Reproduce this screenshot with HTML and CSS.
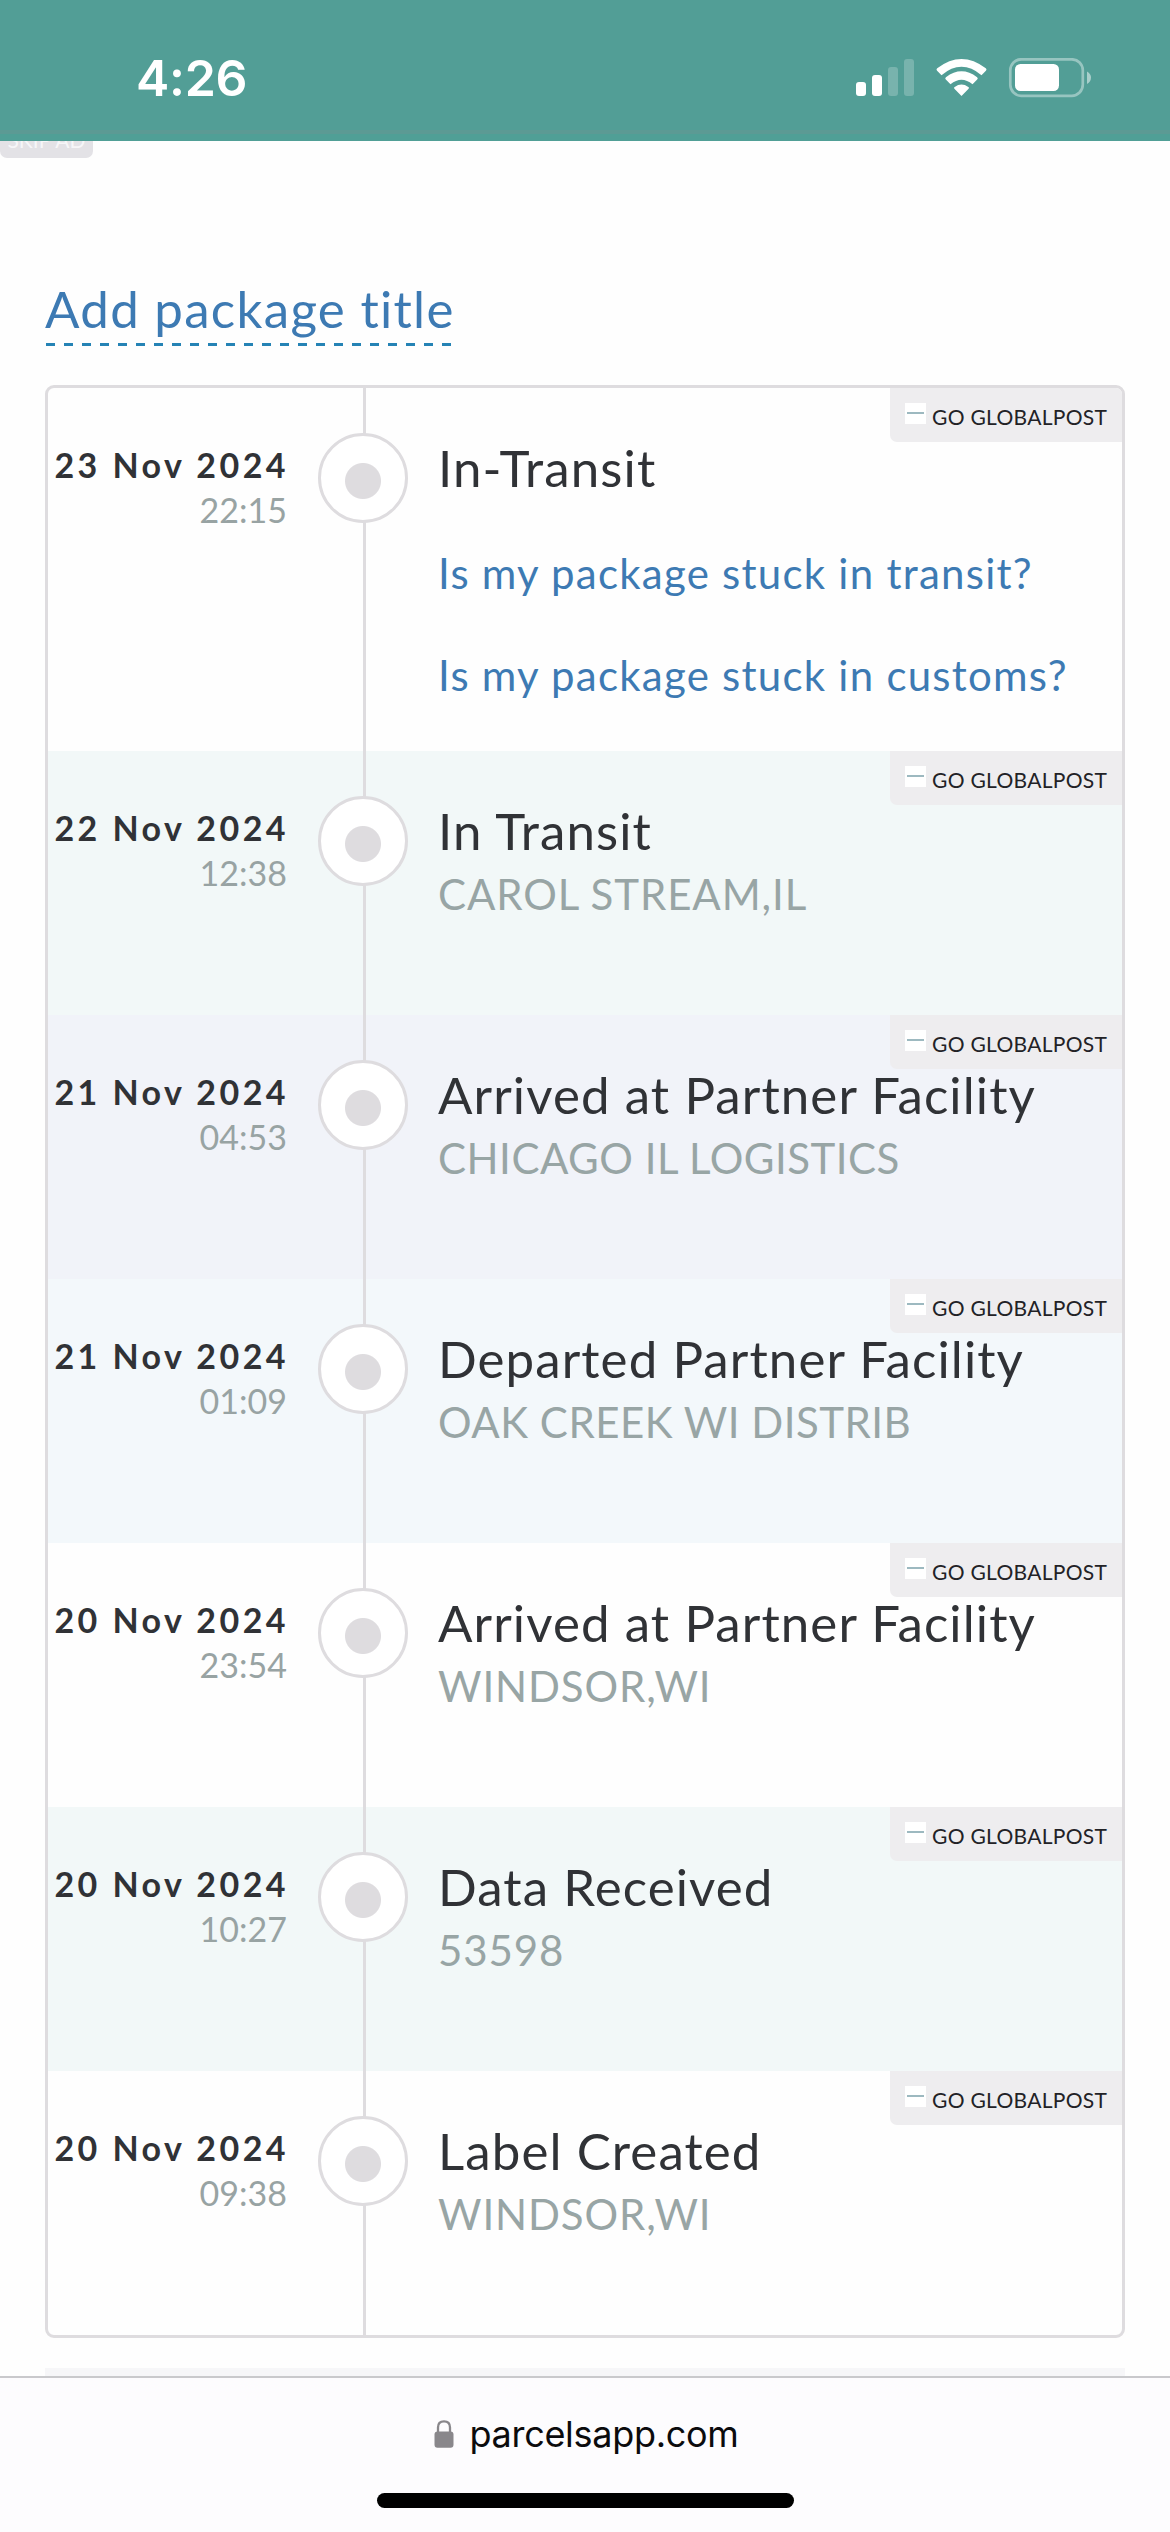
FILE: index.html
```
<!DOCTYPE html>
<html lang="en">
<head>
<meta charset="utf-8">
<title>Parcels</title>
<link rel="stylesheet" href="styles.css">
</head>
<body>
<header class="status">
  <span class="clock">4:26</span>
  <svg class="status-icons" width="236" height="40" viewBox="0 0 236 40" fill="#fff">
    <rect x="0" y="24" width="10" height="14" rx="3"/>
    <rect x="16" y="17" width="10" height="21" rx="3"/>
    <rect x="32" y="9" width="10" height="29" rx="3" opacity=".22"/>
    <rect x="48" y="1" width="10" height="37" rx="3" opacity=".22"/>
    <path d="M105.5 38 L98.4 30.7 Q97.4 29.6 98.7 28.9 Q105.5 24 112.3 28.9 Q113.6 29.6 112.6 30.7 Z"/>
    <path d="M94.5 26.3 L89.8 21.6 Q88.6 20.3 89.9 19.2 Q105.5 7.3 121.1 19.2 Q122.4 20.3 121.2 21.6 L116.5 26.3 Q105.5 17 94.5 26.3 Z"/>
    <path d="M85.5 17.2 L81.1 12.7 Q79.9 11.4 81.2 10.2 Q105.5 -8.4 129.8 10.2 Q131.1 11.4 129.9 12.7 L125.5 17.2 Q105.5 0.4 85.5 17.2 Z"/>
    <rect x="154.3" y="1.3" width="72.5" height="36.5" rx="11" fill="none" stroke="#fff" stroke-width="2.7" opacity=".4"/>
    <rect x="159" y="6" width="44" height="27" rx="5.5"/>
    <path d="M231 13.5 Q235 16 235 19.5 Q235 23.5 231 26 Z" opacity=".5"/>
  </svg>
</header>

<main class="page">
  <div class="ad-strip"><span class="ad-label">SKIP AD</span></div>
  <a class="package-title">Add package title</a>

  <ul class="events">
    <li class="event first">
      <div class="when"><strong class="date">23 Nov 2024</strong><span class="time">22:15</span></div>
      <div class="what">
        <span class="name">In-Transit</span>
        <a class="help">Is my package stuck in transit?</a>
        <a class="help">Is my package stuck in customs?</a>
      </div>
      <i class="marker"></i><span class="carrier"><i class="logo"></i>GO GLOBALPOST</span>
    </li>
    <li class="event mint">
      <div class="when"><strong class="date">22 Nov 2024</strong><span class="time">12:38</span></div>
      <div class="what"><span class="name">In Transit</span><span class="place wide">CAROL STREAM,IL</span></div>
      <i class="marker"></i><span class="carrier"><i class="logo"></i>GO GLOBALPOST</span>
    </li>
    <li class="event lilac">
      <div class="when"><strong class="date">21 Nov 2024</strong><span class="time">04:53</span></div>
      <div class="what"><span class="name">Arrived at Partner Facility</span><span class="place">CHICAGO IL LOGISTICS</span></div>
      <i class="marker"></i><span class="carrier"><i class="logo"></i>GO GLOBALPOST</span>
    </li>
    <li class="event sky">
      <div class="when"><strong class="date">21 Nov 2024</strong><span class="time">01:09</span></div>
      <div class="what"><span class="name">Departed Partner Facility</span><span class="place">OAK CREEK WI DISTRIB</span></div>
      <i class="marker"></i><span class="carrier"><i class="logo"></i>GO GLOBALPOST</span>
    </li>
    <li class="event">
      <div class="when"><strong class="date">20 Nov 2024</strong><span class="time">23:54</span></div>
      <div class="what"><span class="name">Arrived at Partner Facility</span><span class="place wide">WINDSOR,WI</span></div>
      <i class="marker"></i><span class="carrier"><i class="logo"></i>GO GLOBALPOST</span>
    </li>
    <li class="event mint">
      <div class="when"><strong class="date">20 Nov 2024</strong><span class="time">10:27</span></div>
      <div class="what"><span class="name">Data Received</span><span class="place wide">53598</span></div>
      <i class="marker"></i><span class="carrier"><i class="logo"></i>GO GLOBALPOST</span>
    </li>
    <li class="event">
      <div class="when"><strong class="date">20 Nov 2024</strong><span class="time">09:38</span></div>
      <div class="what"><span class="name">Label Created</span><span class="place wide">WINDSOR,WI</span></div>
      <i class="marker"></i><span class="carrier"><i class="logo"></i>GO GLOBALPOST</span>
    </li>
  </ul>
  <div class="next-panel"></div>
</main>

<footer class="browser-bar">
  <div class="address">
    <svg class="lock" width="20" height="28" viewBox="0 0 20 28">
      <path d="M4 13 V7.5 Q4 1.3 10 1.3 Q16 1.3 16 7.5 V13" fill="none" stroke="#89878b" stroke-width="2.3"/>
      <rect x="0.5" y="11.5" width="19" height="16.3" rx="3" fill="#89878b"/>
    </svg>
    <span>parcelsapp.com</span>
  </div>
  <div class="home"></div>
</footer>
</body>
</html>
```
FILE: styles.css
```
* { box-sizing: border-box; }
body {
  margin: 0;
  width: 1170px;
  height: 2532px;
  display: flex;
  flex-direction: column;
  overflow: hidden;
  background: #fefefe;
  font-family: Lato, "Noto Sans", sans-serif;
  font-variant-ligatures: none;
}

.status {
  height: 141px;
  padding: 48px 78px 0 136px;
  display: flex;
  justify-content: space-between;
  align-items: flex-start;
  background: linear-gradient(#529e96 130px, #5c9a94 130px, #5c9a94 134px, #509f96 134px);
}
.clock {
  font: 600 50px/60px Inter, sans-serif;
  letter-spacing: -0.3px;
  color: #fff;
}
.status-icons { margin-top: 10px; }

.page {
  height: 2235px;
  padding: 0 45px;
  display: flex;
  flex-direction: column;
  align-items: flex-start;
}
.ad-strip {
  height: 17px;
  width: 93px;
  margin-left: -45px;
  overflow: hidden;
  display: flex;
  align-items: flex-end;
  border-radius: 0 0 7px 7px;
  background: #e3e2e6;
}
.ad-label {
  width: 93px;
  text-align: center;
  font-size: 21px;
  line-height: 36px;
  color: #f6f6f8;
}

.package-title {
  margin-top: 121px;
  height: 67px;
  font-size: 51px;
  line-height: 60px;
  letter-spacing: 1.3px;
  color: #3d7ab3;
  background: repeating-linear-gradient(90deg, #2583b5 0 9px, transparent 9px 18px) 1px 100% / 100% 3px no-repeat;
}

.events {
  margin: 39px 0 0;
  padding: 0;
  width: 1080px;
  list-style: none;
  border: 3px solid #dedcdf;
  border-radius: 9px;
  overflow: hidden;
}
.event {
  position: relative;
  height: 264px;
  display: grid;
  grid-template-columns: 318px 1fr;
}
.event.first { height: 363px; }
.event.mint { background: #f2f8f8; }
.event.lilac { background: #f1f3f9; }
.event.sky { background: #f3f8fb; }

.when {
  display: flex;
  flex-direction: column;
  align-items: flex-end;
  padding: 57px 74px 0 0;
  border-right: 3px solid #dedcdf;
  white-space: nowrap;
}
.date {
  font-size: 34px;
  line-height: 40px;
  letter-spacing: 3.45px;
  color: #303236;
}
.time {
  margin: 2px 2px 0 0;
  font-size: 34px;
  line-height: 45px;
  color: #98a3a3;
}

.what {
  display: flex;
  flex-direction: column;
  padding: 50px 0 0 72px;
  white-space: nowrap;
}
.name {
  font-size: 51px;
  line-height: 60px;
  letter-spacing: 1.1px;
  color: #303236;
}
.place {
  margin-top: 8px;
  font-size: 42px;
  line-height: 50px;
  letter-spacing: 0.5px;
  color: #98a5a5;
}
.place.wide { letter-spacing: 0.9px; }
.help {
  margin-top: 50px;
  font-size: 42px;
  line-height: 50px;
  letter-spacing: 1.25px;
  color: #3d7ab3;
}
.help + .help { margin-top: 52px; }

.marker {
  position: absolute;
  left: 270px;
  top: 45px;
  width: 90px;
  height: 90px;
  border: 3px solid #dedcdf;
  border-radius: 50%;
  background: radial-gradient(circle at 42px 45px, #dedcdf 17.5px, #fff 18.5px);
}

.carrier {
  position: absolute;
  top: 0;
  right: 0;
  width: 232px;
  height: 54px;
  padding-left: 15px;
  display: flex;
  gap: 6px;
  font-size: 21px;
  line-height: 57px;
  letter-spacing: 0.3px;
  white-space: nowrap;
  color: #222226;
  background: #eeedef;
  border-radius: 0 0 0 7px;
}
.logo {
  width: 21px;
  height: 21px;
  margin-top: 15px;
  background: linear-gradient(#9db9c0, #9db9c0) 50% 9px / 17px 2px no-repeat #fff;
}

.next-panel {
  margin-top: 30px;
  width: 1080px;
  height: 8px;
  background: #f6f6f8;
}

.browser-bar {
  height: 156px;
  padding-top: 33px;
  display: flex;
  flex-direction: column;
  align-items: center;
  border-top: 2px solid #c9c9cc;
  background: #fdfcfe;
}
.address {
  height: 46px;
  display: flex;
  gap: 16px;
  margin-left: 2px;
  font: 36px/46px Inter, sans-serif;
  letter-spacing: -0.3px;
  color: #0b0b0d;
}
.lock { margin-top: 9px; }
.home {
  margin-top: 36px;
  width: 417px;
  height: 15px;
  border-radius: 8px;
  background: #000;
}
```
